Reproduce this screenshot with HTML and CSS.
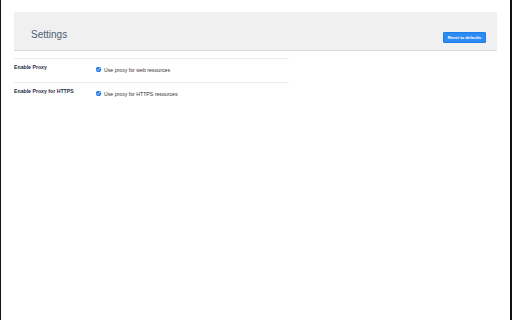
FILE: index.html
```html
<!DOCTYPE html>
<html lang="en">
<head>
    <meta charset="UTF-8">
    <meta name="viewport" content="width=device-width, initial-scale=1.0">
    <title>Settings</title>
    <link rel="stylesheet" href="styles.css">
</head>
<body>
    <div class="header">
        <h1>Settings</h1>
        <button class="reset-btn">Reset to defaults</button>
    </div>

    <div class="options">
        <div class="option-row">
            <div class="option-label">Enable Proxy</div>
            <label class="option-control">
                <input type="checkbox" checked>
                <span>Use proxy for web resources</span>
            </label>
        </div>
        <div class="option-row">
            <div class="option-label">Enable Proxy for HTTPS</div>
            <label class="option-control">
                <input type="checkbox" checked>
                <span>Use proxy for HTTPS resources</span>
            </label>
        </div>
    </div>
</body>
</html>
```

FILE: styles.css
```css
html, body {
    height: 100%;
}

body {
    margin: 0;
    font-family: "Liberation Sans", Arial, sans-serif;
    background-color: white;
    border-left: 1px solid #111;
    border-right: 2px solid #111;
    box-sizing: border-box;
}

.header {
    display: flex;
    justify-content: space-between;
    align-items: flex-end;
    margin: 12px 13px 0 13px;
    height: 39px;
    padding: 0 11px 7px 17px;
    background-color: #f0f0f0;
    border-bottom: 1px solid #dcdcdc;
    box-sizing: border-box;
}

h1 {
    margin: 0 0 3px 0;
    font-size: 10px;
    font-weight: normal;
    color: #4f5d73;
}

.reset-btn {
    background-color: #2b8bf2;
    color: white;
    border: 1px solid #1d7ee6;
    border-radius: 1px;
    font-family: "Liberation Sans", Arial, sans-serif;
    font-size: 4.2px;
    font-weight: bold;
    white-space: nowrap;
    padding: 0;
    height: 11px;
    width: 43px;
    cursor: pointer;
}

.options {
    width: 275px;
    margin: 7px 0 0 13px;
}

.option-row {
    display: flex;
    height: 24px;
    border-top: 1px solid #ececec;
    box-sizing: border-box;
}

.option-label {
    width: 82px;
    padding-top: 5px;
    font-size: 5.2px;
    font-weight: bold;
    color: #1f2b44;
}

.option-control {
    display: flex;
    align-items: center;
    gap: 3px;
    height: 5px;
    margin-top: 8px;
    font-size: 5.2px;
    color: #333;
}

.option-control input {
    width: 5px;
    height: 5px;
    margin: 0;
    accent-color: #1a73e8;
}
```
